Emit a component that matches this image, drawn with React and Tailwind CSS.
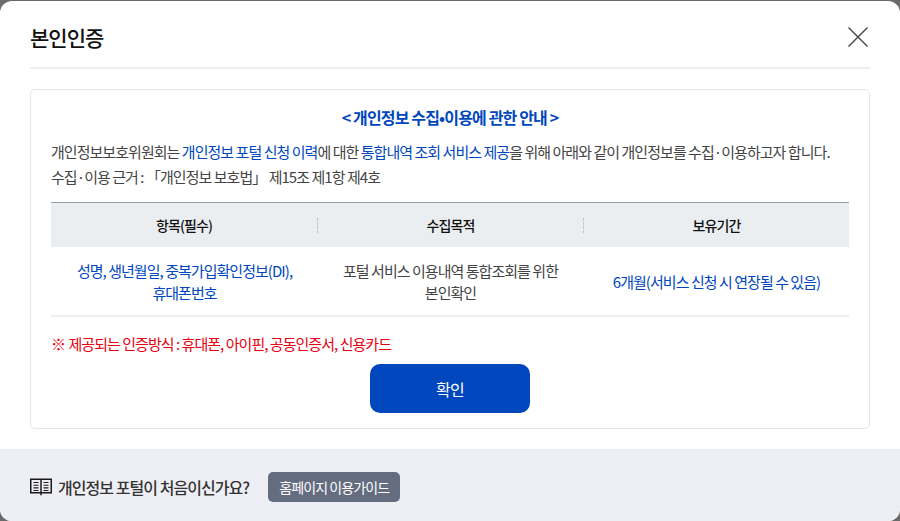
import React from "react";

const B = ({ children }) => <span className="text-[#0047bd]">{children}</span>;

export default function App() {
  return (
    <div className="h-[521px] w-[900px] overflow-hidden bg-[#6b6b6b] pt-px font-['Noto_Sans_CJK_KR','Noto_Sans',sans-serif] text-[15px] tracking-[-0.96px] text-[#444]">
      <div className="flex h-[520px] flex-col overflow-hidden rounded-[12px] bg-white">
        <div className="mx-[30px] flex h-[68px] shrink-0 items-center justify-between border-b-2 border-[#eeeeee] pt-[6px]">
          <h1 className="text-[21px] leading-[30px] font-medium tracking-[-1px] text-[#111]">본인인증</h1>
          <button className="mr-[2px] flex h-[20px] w-[20px] items-center justify-center text-[#444]" aria-label="닫기">
            <svg width="20" height="20" viewBox="0 0 20 20" fill="none" stroke="currentColor" strokeWidth="1.4">
              <path d="M.5.5l19 19M19.500.5l-19 19" />
            </svg>
          </button>
        </div>

        <div className="mx-[30px] mt-[20px] flex h-[340px] shrink-0 flex-col rounded-[5px] border border-[#e5e5e5] px-[20px] pt-[15px]">
          <p className="text-center text-[16px] leading-[24px] font-bold tracking-[-0.85px] text-[#0047bd]">&lt; 개인정보 수집•이용에 관한 안내 &gt;</p>
          <p className="mt-[10px] leading-[25px]">
            개인정보보호위원회는 <B>개인정보 포털 신청 이력</B>에 대한 <B>통합내역 조회 서비스 제공</B>을 위해 아래와 같이 개인정보를 수집·이용하고자 합니다.
            <br />
            수집·이용 근거 : 「개인정보 보호법」 제15조 제1항 제4호
          </p>

          <div className="mt-[13px] border-t border-[#999]">
            <div className="grid h-[44px] grid-cols-[267px_266px_265px] items-center bg-[#ebeef1] text-[14px] font-medium tracking-[-0.9px] text-[#111]">
              <div className="border-r border-dashed border-[#c4c4c4] text-center leading-[15px]">항목(필수)</div>
              <div className="border-r border-dashed border-[#c4c4c4] text-center leading-[15px]">수집목적</div>
              <div className="text-center leading-[15px]">보유기간</div>
            </div>
            <div className="grid h-[70px] grid-cols-[267px_266px_265px] items-center border-b-2 border-[#f0f0f0] pt-[2px] text-center leading-[22px]">
              <div className="px-[20px] text-[#0047bd]">성명, 생년월일, 중복가입확인정보(DI),<br />휴대폰번호</div>
              <div className="pr-[21px] pl-[20px]">포털 서비스 이용내역 통합조회를 위한<br />본인확인</div>
              <div className="text-[#0047bd]">6개월(서비스 신청 시 연장될 수 있음)</div>
            </div>
          </div>

          <p className="mt-[16px] leading-[22px] text-[#e60012]">※<span className="ml-[1px]"> 제공되는 인증방식 : 휴대폰, 아이핀, 공동인증서, 신용카드</span></p>

          <button className="mx-auto mt-[9px] h-[49px] w-[160px] rounded-[10px] bg-[#0047bd] text-[16px] tracking-[-0.8px] text-white">확인</button>
        </div>

        <div className="mt-[20px] flex flex-1 items-center bg-[#eeeff4] px-[30px] pt-[4px]">
          <svg width="22" height="18" viewBox="0 0 22 18" fill="none" stroke="#1a1a1a" strokeWidth="1.5" className="shrink-0">
            <path d="M.75 1.250h20.500v13.500H.75z" />
            <path d="M11 1.250v16" />
            <path strokeWidth="1.100" d="M3.500 4.500h5M3.500 7.200h5M3.500 9.900h5M3.500 12.500h5M13.500 4.500h5M13.500 7.200h5M13.500 9.900h5M13.500 12.500h5" />
          </svg>
          <span className="ml-[6px] text-[16px] font-medium tracking-[-0.95px] text-[#333]">개인정보 포털이 처음이신가요?</span>
          <button className="ml-[19px] h-[30px] w-[132px] rounded-[5px] bg-[#646d80] text-[14px] tracking-[-0.9px] text-white">홈페이지 이용가이드</button>
        </div>
      </div>
    </div>
  );
}
